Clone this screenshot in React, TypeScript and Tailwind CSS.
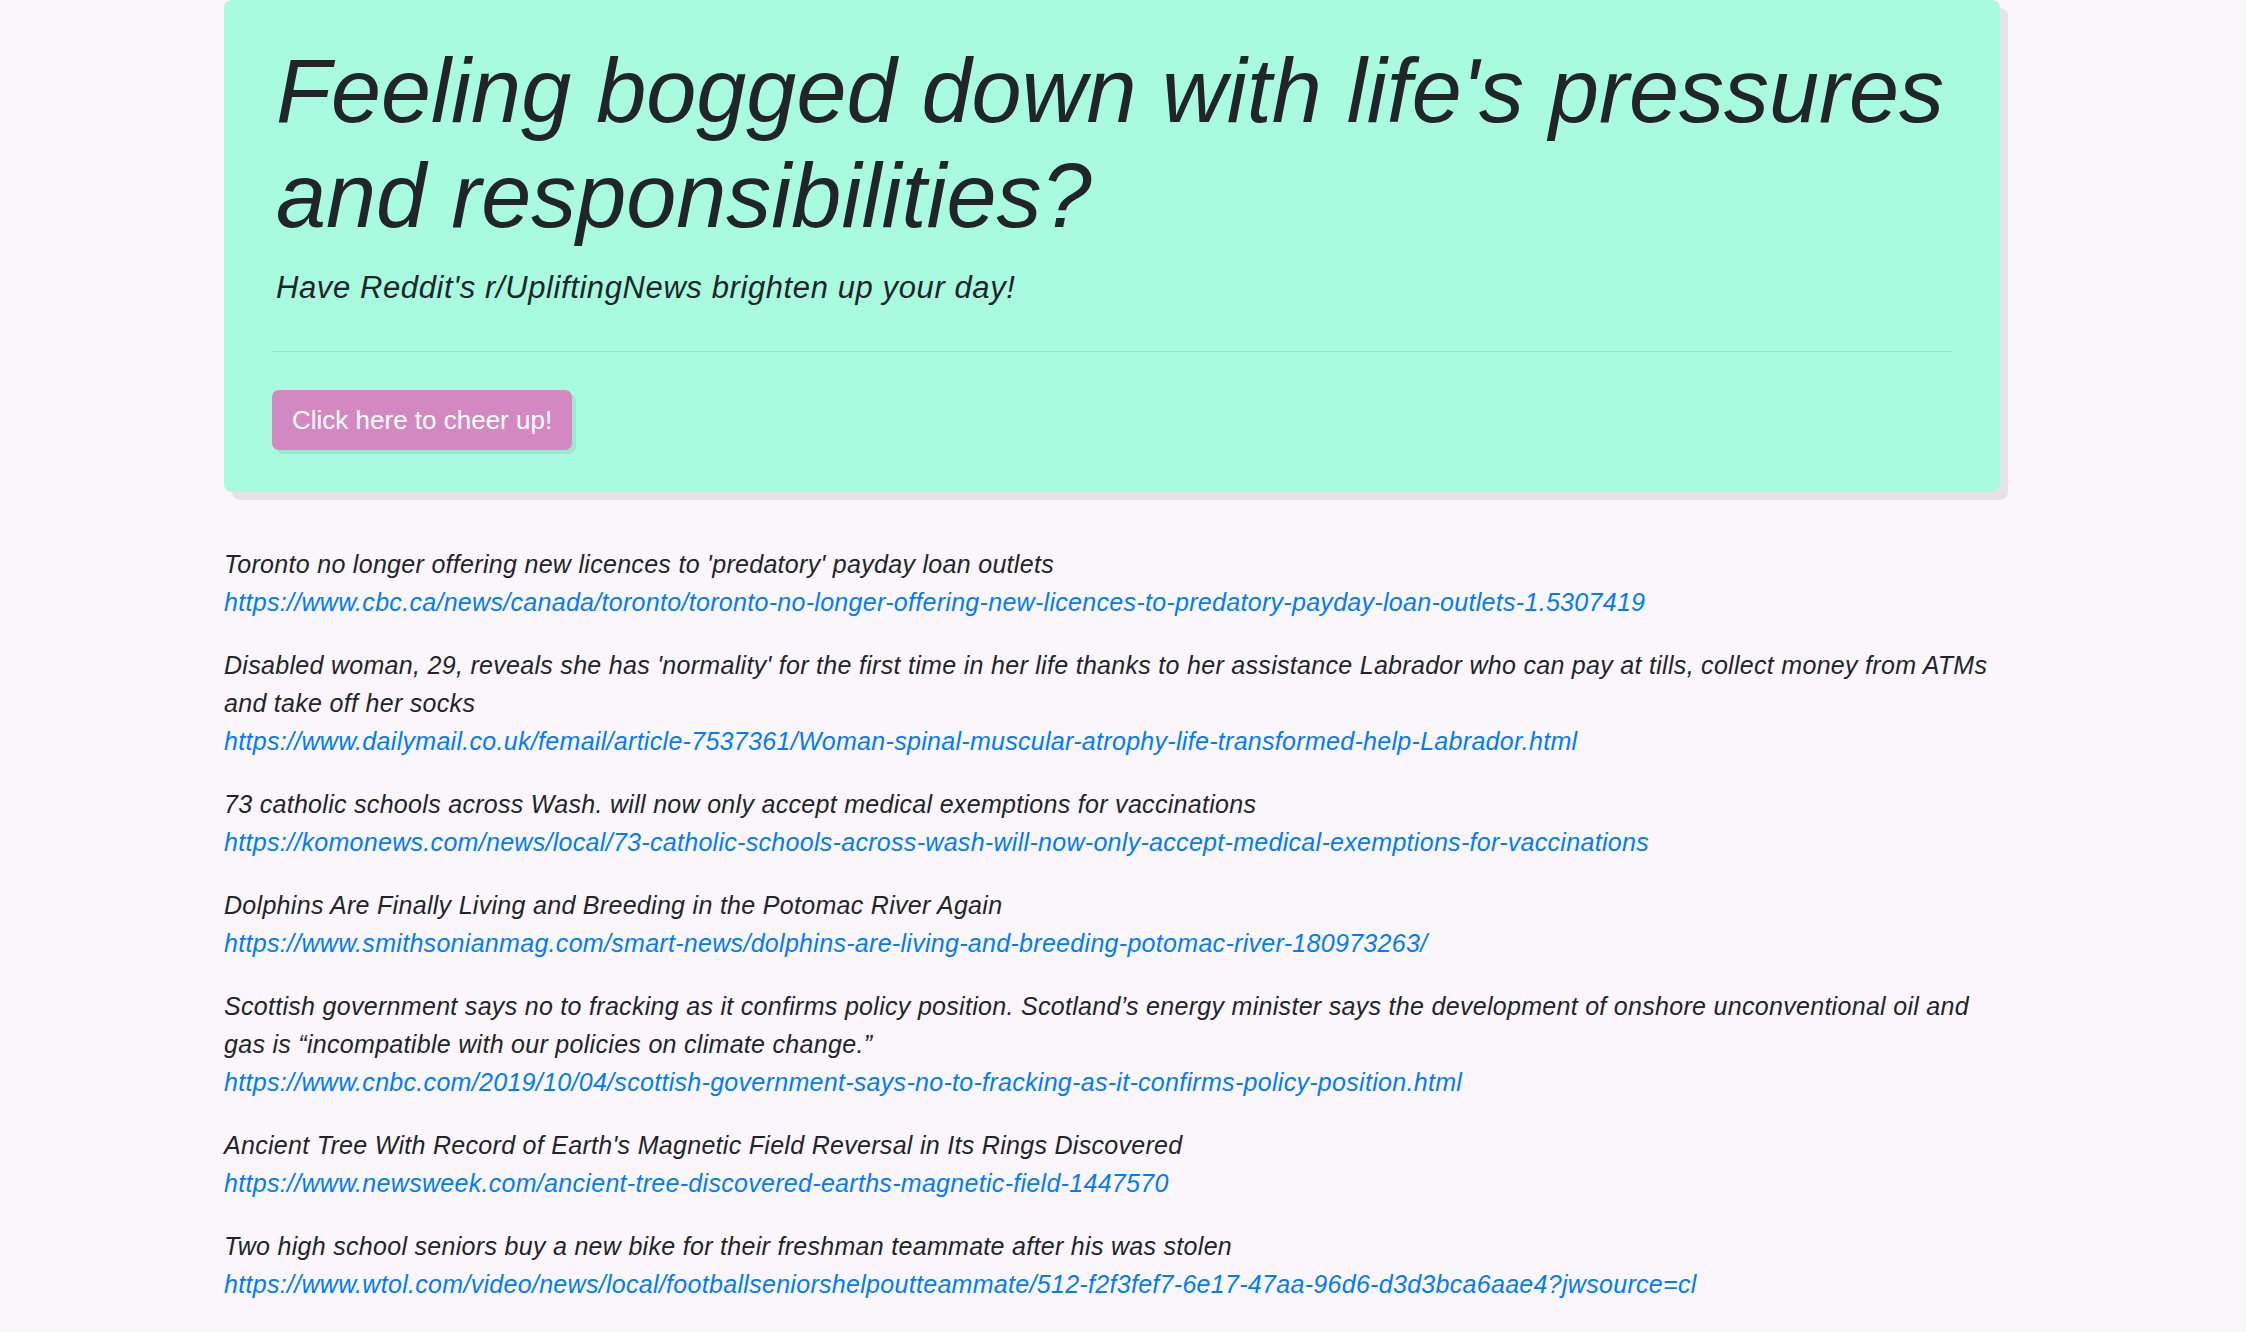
import React from 'react'

const stories = [
    {
        title: "Toronto no longer offering new licences to 'predatory' payday loan outlets",
        url: 'https://www.cbc.ca/news/canada/toronto/toronto-no-longer-offering-new-licences-to-predatory-payday-loan-outlets-1.5307419',
    },
    {
        title: "Disabled woman, 29, reveals she has 'normality' for the first time in her life thanks to her assistance Labrador who can pay at tills, collect money from ATMs and take off her socks",
        url: 'https://www.dailymail.co.uk/femail/article-7537361/Woman-spinal-muscular-atrophy-life-transformed-help-Labrador.html',
    },
    {
        title: '73 catholic schools across Wash. will now only accept medical exemptions for vaccinations',
        url: 'https://komonews.com/news/local/73-catholic-schools-across-wash-will-now-only-accept-medical-exemptions-for-vaccinations',
    },
    {
        title: 'Dolphins Are Finally Living and Breeding in the Potomac River Again',
        url: 'https://www.smithsonianmag.com/smart-news/dolphins-are-living-and-breeding-potomac-river-180973263/',
    },
    {
        title: 'Scottish government says no to fracking as it confirms policy position. Scotland\u2019s energy minister says the development of onshore unconventional oil and gas is \u201cincompatible with our policies on climate change.\u201d',
        url: 'https://www.cnbc.com/2019/10/04/scottish-government-says-no-to-fracking-as-it-confirms-policy-position.html',
    },
    {
        title: "Ancient Tree With Record of Earth's Magnetic Field Reversal in Its Rings Discovered",
        url: 'https://www.newsweek.com/ancient-tree-discovered-earths-magnetic-field-1447570',
    },
    {
        title: 'Two high school seniors buy a new bike for their freshman teammate after his was stolen',
        url: 'https://www.wtol.com/video/news/local/footballseniorshelpoutteammate/512-f2f3fef7-6e17-47aa-96d6-d3d3bca6aae4?jwsource=cl',
    },
]

const App = () => {
    return (
        <main className="min-h-screen bg-[#fbf6fb] font-['Liberation_Sans',Arial,sans-serif] text-[#212529]">
            <div className="ml-[224px] w-[1776px] pb-[20px]">
                <section className="bg-[#a8fbdf] rounded-[8px] shadow-[8px_8px_0_#e7e2e7] px-[48px] pt-[39px] pb-[42px]">
                    <h1 className="pl-[4px] text-[90px] leading-[105px] italic font-light">
                        Feeling bogged down with life's pressures and responsibilities?
                    </h1>
                    <p className="pl-[4px] mt-[16px] text-[31px] leading-[45px] tracking-[0.6px] italic font-light">
                        Have Reddit's r/UpliftingNews brighten up your day!
                    </p>
                    <hr className="mt-[41px] mb-[38px] border-t border-[#97e4c9]" />
                    <button className="h-[60px] px-[20px] rounded-[7px] bg-[#d488c1] text-white text-[26px] shadow-[4px_4px_0_#9ee8cf]">
                        Click here to cheer up!
                    </button>
                </section>

                <div className="mt-[53px]">
                    {stories.map((s, i) => (
                        <div key={i} className="mb-[25px] text-[25px] leading-[38px] tracking-[0.3px] italic">
                            <div>{s.title}</div>
                            <a href={s.url} className="text-[#007bff] block">{s.url}</a>
                        </div>
                    ))}
                </div>
            </div>
        </main>
    )
}

export default App
